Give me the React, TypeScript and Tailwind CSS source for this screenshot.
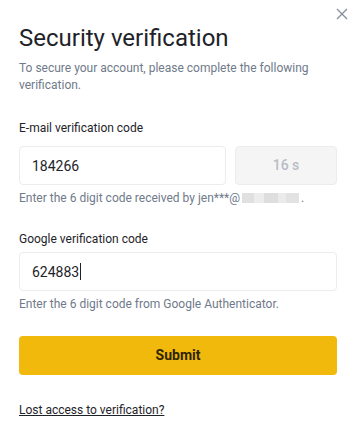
import React, { useState } from 'react';

const font = { fontFamily: 'Roboto, "Noto Sans", sans-serif' };

export default function App() {
  const [emailCode, setEmailCode] = useState('184266');
  const [googleCode, setGoogleCode] = useState('624883');

  return (
    <div className="w-[356px] h-[438px] bg-white relative text-[#1e2329]" style={font}>
      <button className="absolute right-[6px] top-[6px] w-[16px] h-[16px] flex items-center justify-center text-[#848e9c]">
        <svg width="12" height="12" viewBox="0 0 12 12" fill="none" stroke="currentColor" strokeWidth="1.3">
          <path d="M1 1L11 11M11 1L1 11" />
        </svg>
      </button>

      <div className="px-[19px] pt-[22px]">
        <h1 className="text-[24px] leading-[32px] font-normal text-[#1e2329]">Security verification</h1>
        <p className="mt-[6px] text-[12px] leading-[17px] text-[#707a8a]">
          To secure your account, please complete the following verification.
        </p>

        <div className="mt-[26px]">
          <label className="block text-[12px] leading-[16px] text-[#1e2329]">E-mail verification code</label>
          <div className="mt-[10px] flex gap-[9px]">
            <input
              value={emailCode}
              onChange={(e) => setEmailCode(e.target.value)}
              className="w-[207px] h-[39px] border border-[#eaecef] rounded-[4px] px-[12px] text-[14px] text-[#1e2329] outline-none"
            />
            <div className="flex-1 h-[39px] rounded-[4px] bg-[#f5f5f5] border border-[#eaecef] flex items-center justify-center text-[14px] font-medium text-[#b7bdc6]">
              16 s
            </div>
          </div>
          <p className="mt-[5px] text-[12px] leading-[16px] text-[#707a8a] flex items-center">
            Enter the 6 digit code received by jen***@
            <span className="inline-flex h-[10px] ml-[2px]">
              <span className="w-[12px] bg-[#e0e0e0]" />
              <span className="w-[10px] bg-[#ececec]" />
              <span className="w-[14px] bg-[#dedede]" />
              <span className="w-[8px] bg-[#ebebeb]" />
              <span className="w-[13px] bg-[#e2e2e2]" />
            </span>
            <span className="ml-[2px]">.</span>
          </p>
        </div>

        <div className="mt-[25px]">
          <label className="block text-[12px] leading-[16px] text-[#1e2329]">Google verification code</label>
          <div className="relative mt-[5px]">
            <input
              value={googleCode}
              onChange={(e) => setGoogleCode(e.target.value)}
              className="w-full h-[39px] border border-[#eaecef] rounded-[4px] px-[12px] text-[14px] text-[#1e2329] outline-none"
            />
            <span className="absolute left-[61px] top-[11px] w-px h-[17px] bg-[#1e2329]" />
          </div>
          <p className="mt-[5px] text-[12px] leading-[16px] text-[#707a8a]">Enter the 6 digit code from Google Authenticator.</p>
        </div>

        <button className="mt-[24px] w-full h-[39px] rounded-[4px] bg-[#f0b90b] text-[14px] font-bold text-[#2e2400]">
          Submit
        </button>

        <a href="#" className="block mt-[27px] text-[12px] leading-[16px] underline text-[#1e2329] w-fit">
          Lost access to verification?
        </a>
      </div>
    </div>
  );
}
